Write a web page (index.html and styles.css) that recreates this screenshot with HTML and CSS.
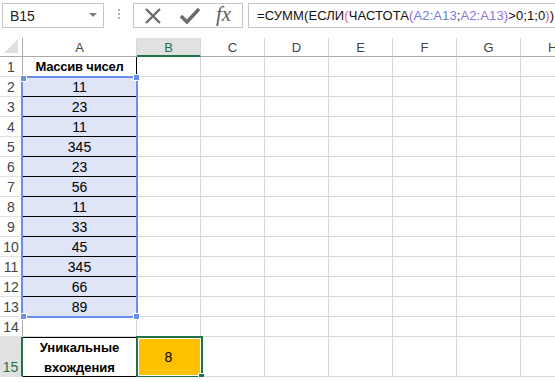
FILE: index.html
```html
<!DOCTYPE html>
<html lang="ru">

<head>
    <meta charset="UTF-8">
    <title>Уникальные вхождения</title>
    <link rel="stylesheet" href="styles.css">
</head>

<body>
    <!-- Строка формул -->
    <div class="toolbar">
        <div class="name-box">
            <span>B15</span>
            <span class="drop"></span>
        </div>
        <div class="dots"><i></i><i></i><i></i></div>
        <div class="buttons">
            <svg class="icon" width="20" height="20" viewBox="0 0 20 20">
                <path d="M3 3 L17 17 M17 3 L3 17" stroke="#6b6b6b" stroke-width="2.4" fill="none" />
            </svg>
            <svg class="icon" width="22" height="20" viewBox="0 0 22 20">
                <path d="M2 10 L8 16 L20 3" stroke="#6b6b6b" stroke-width="3.4" fill="none" />
            </svg>
            <span class="fx">fx</span>
        </div>
        <div class="formula">=СУММ(ЕСЛИ<span class="p1">(</span>ЧАСТОТА<span class="p2">(</span><span class="r1">A2:A13</span>;<span class="r2">A2:A13</span><span class="p2">)</span>&gt;0;1;0<span class="p1">)</span>)</div>
    </div>

    <!-- Лист -->
    <div class="sheet" id="sheet">
        <div class="row head">
            <div class="corner"><span class="tri"></span></div>
            <div class="ch col-a">A</div>
            <div class="ch col-b active">B</div>
            <div class="ch">C</div>
            <div class="ch">D</div>
            <div class="ch">E</div>
            <div class="ch">F</div>
            <div class="ch">G</div>
            <div class="ch col-h">H</div>
        </div>
        <div class="range">
            <i class="h tl"></i><i class="h tr"></i><i class="h bl"></i><i class="h br"></i>
        </div>
        <div class="cursor"><i></i></div>
    </div>

    <script>
        const sheet = document.getElementById('sheet');
        const values = [11, 23, 11, 345, 23, 56, 11, 33, 45, 345, 66, 89];

        // Строим строки 1..15
        for (let r = 1; r <= 15; r++) {
            const row = document.createElement('div');
            row.className = 'row' + (r === 15 ? ' tall' : '');

            const rh = document.createElement('div');
            rh.className = 'rh' + (r === 15 ? ' active' : '');
            rh.textContent = r;
            row.appendChild(rh);

            const a = document.createElement('div');
            a.className = 'c col-a';
            if (r === 1) {
                a.classList.add('title');
                a.textContent = 'Массив чисел';
            } else if (r <= 13) {
                a.classList.add('ref');
                if (r < 13) a.classList.add('line');
                a.textContent = values[r - 2];
            } else if (r === 15) {
                a.classList.add('total');
                a.innerHTML = 'Уникальные<br>вхождения';
            }
            row.appendChild(a);

            const b = document.createElement('div');
            b.className = 'c col-b';
            if (r === 15) {
                b.classList.add('result');
                b.textContent = '8';
            }
            row.appendChild(b);

            for (let k = 0; k < 5; k++) {
                const c = document.createElement('div');
                c.className = 'c';
                row.appendChild(c);
            }
            const h = document.createElement('div');
            h.className = 'c col-h';
            row.appendChild(h);

            sheet.insertBefore(row, sheet.querySelector('.range'));
        }
    </script>
</body>

</html>
```

FILE: styles.css
```css
body {
    margin: 0;
    background-color: #fff;
    font-family: "Liberation Sans", Arial, sans-serif;
    color: #000;
    overflow: hidden;
}

/* Строка формул */
.toolbar {
    display: flex;
    align-items: center;
    height: 38px;
    padding: 3px 0 10px 2px;
    box-sizing: border-box;
}

.name-box {
    width: 102px;
    height: 25px;
    box-sizing: border-box;
    border: 1px solid #c6c6c6;
    display: flex;
    align-items: center;
    justify-content: space-between;
    padding: 0 6px 0 7px;
    font-size: 14px;
    color: #222;
}

.drop {
    width: 0;
    height: 0;
    border-left: 4px solid transparent;
    border-right: 4px solid transparent;
    border-top: 4px solid #7a7a7a;
    margin-bottom: 2px;
}

.dots {
    width: 29px;
    display: flex;
    flex-direction: column;
    align-items: center;
    gap: 2px;
    margin-top: -4px;
}

.dots i {
    width: 2px;
    height: 2px;
    background-color: #b0b0b0;
}

.buttons {
    width: 110px;
    height: 25px;
    box-sizing: border-box;
    border: 1px solid #c6c6c6;
    display: flex;
    align-items: center;
    padding-left: 9px;
    gap: 16px;
}

.icon {
    display: block;
}

.fx {
    font-family: "Liberation Serif", serif;
    font-style: italic;
    font-size: 21px;
    color: #606060;
    margin-left: -1px;
    margin-top: -3px;
}

.formula {
    flex: 1;
    height: 25px;
    margin-left: 5px;
    box-sizing: border-box;
    border: 1px solid #c6c6c6;
    border-right: none;
    padding-left: 8px;
    font-size: 13px;
    letter-spacing: 0.1px;
    line-height: 23px;
    white-space: nowrap;
    overflow: hidden;
    color: #111;
}

.p1 {
    color: #e2607a;
}

.p2 {
    color: #a45fcc;
}

.r1 {
    color: #6f80e0;
}

.r2 {
    color: #8a77dc;
}

/* Лист */
.sheet {
    position: relative;
}

.row {
    display: flex;
    height: 20px;
}

.row.tall {
    height: 40px;
}

.row.head {
    height: 19px;
}

.corner,
.rh {
    width: 23px;
    flex: none;
    box-sizing: border-box;
    border-right: 1px solid #ababab;
}

.corner {
    border-bottom: 1px solid #ababab;
    position: relative;
}

.tri {
    position: absolute;
    right: 4px;
    bottom: 3px;
    width: 0;
    height: 0;
    border-left: 14px solid transparent;
    border-bottom: 14px solid #dfdfdf;
}

.ch,
.c {
    width: 64px;
    flex: none;
    box-sizing: border-box;
    border-right: 1px solid #d8d8d8;
    display: flex;
    align-items: center;
    justify-content: center;
}

.ch {
    border-bottom: 1px solid #ababab;
    font-size: 13px;
    color: #444;
    padding-top: 1px;
}

.ch.active {
    background-color: #e1e1e1;
    color: #217346;
    border-bottom: 2px solid #217346;
}

.col-a {
    width: 114px;
}

.col-h {
    width: 34px;
    border-right: none;
    justify-content: flex-start;
    padding-left: 27px;
}

.rh {
    border-bottom: 1px solid #e1e1e1;
    font-size: 14px;
    color: #444;
    display: flex;
    align-items: center;
    justify-content: center;
    padding-top: 1px;
}

.rh.active {
    background-color: #e1e1e1;
    color: #217346;
    border-right: 2px solid #217346;
    align-items: flex-end;
    padding-bottom: 1px;
}

.c {
    border-bottom: 1px solid #d8d8d8;
    font-size: 14px;
}

.c.title {
    font-weight: bold;
    font-size: 13px;
    letter-spacing: -0.2px;
    border-right: 1px solid #000;
}

.c.ref {
    background-color: #dfe5f7;
}

.c.line {
    border-bottom: 1px solid #000;
}

.c.total {
    font-weight: bold;
    font-size: 13px;
    line-height: 20px;
    text-align: center;
    border-top: 1px solid #000;
    border-bottom: 1px solid #000;
    padding-top: 1px;
}

.c.result {
    background-color: #ffc000;
}

/* Выделение диапазона A2:A13 */
.range {
    position: absolute;
    left: 21px;
    top: 38px;
    width: 117px;
    height: 242px;
    box-sizing: border-box;
    border: 2px solid #6a8fe6;
    pointer-events: none;
}

.range .h {
    position: absolute;
    width: 5px;
    height: 5px;
    background-color: #6a8fe6;
    border: 1px solid #fff;
}

.range .tl {
    left: -3px;
    top: -3px;
}

.range .tr {
    right: -4px;
    top: -4px;
}

.range .bl {
    left: -3px;
    bottom: -4px;
}

.range .br {
    right: -4px;
    bottom: -4px;
}

/* Активная ячейка B15 */
.cursor {
    position: absolute;
    left: 136px;
    top: 298px;
    width: 67px;
    height: 42px;
    box-sizing: border-box;
    border: 2px solid #217346;
    box-shadow: inset 0 0 0 1px #fff;
}

.cursor i {
    position: absolute;
    right: -4px;
    bottom: -4px;
    width: 5px;
    height: 5px;
    background-color: #217346;
    border: 1px solid #fff;
}
```
